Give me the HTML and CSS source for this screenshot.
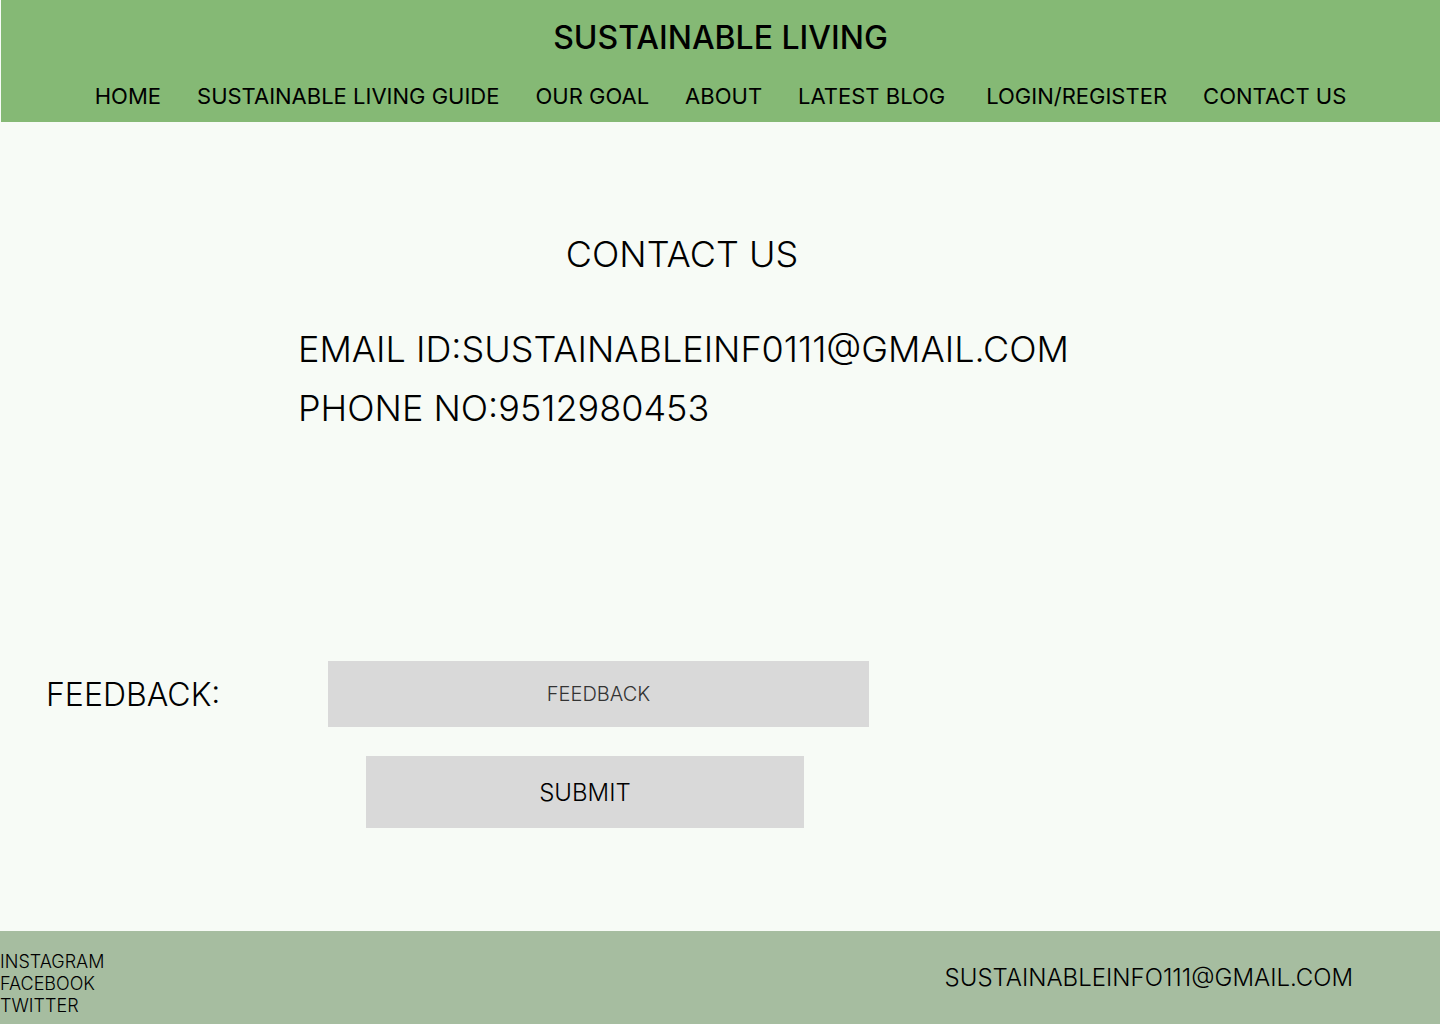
FILE: index.html
```html
<!DOCTYPE html>
<html lang="en">
<head>
<meta charset="utf-8">
<title>Contact Us - Sustainable Living</title>
<link rel="stylesheet" href="styles.css">
</head>
<body>
<header class="site-header">
  <h1 class="site-title">SUSTAINABLE LIVING</h1>
  <nav class="nav">
    <a href="#" class="nav-link">HOME</a>
    <a href="#" class="nav-link">SUSTAINABLE LIVING GUIDE</a>
    <a href="#" class="nav-link">OUR GOAL</a>
    <a href="#" class="nav-link">ABOUT</a>
    <a href="#" class="nav-link">LATEST BLOG</a>
    <a href="#" class="nav-link nav-link-wide">LOGIN/REGISTER</a>
    <a href="#" class="nav-link">CONTACT US</a>
  </nav>
</header>
<main class="main">
  <section class="contact">
    <h2 class="contact-title">CONTACT US</h2>
    <p class="contact-line">EMAIL ID:SUSTAINABLEINF0111@GMAIL.COM</p>
    <p class="contact-line">PHONE NO:9512980453</p>
  </section>
  <form class="feedback" onsubmit="return false;">
    <div class="feedback-row">
      <label class="feedback-label" for="fb">FEEDBACK:</label>
      <input class="feedback-input" id="fb" type="text" placeholder="FEEDBACK">
    </div>
    <button class="submit" type="submit">SUBMIT</button>
  </form>
</main>
<footer class="footer">
  <div class="social">
    <a href="#" class="social-link">INSTAGRAM</a>
    <a href="#" class="social-link">FACEBOOK</a>
    <a href="#" class="social-link">TWITTER</a>
  </div>
  <div class="footer-email">SUSTAINABLEINFO111@GMAIL.COM</div>
</footer>
</body>
</html>
```
FILE: styles.css
```css
* { box-sizing: border-box; }
html, body { margin: 0; padding: 0; }
body {
  background: #f7fbf6;
  font-family: Inter, "Noto Sans", sans-serif;
  color: #000;
  width: 1440px;
}
.site-header {
  background: #85b975;
  margin-left: 1px;
  height: 122px;
  padding-top: 20px;
  display: flex;
  flex-direction: column;
  align-items: center;
}
.site-title {
  margin: 0;
  font-size: 32px;
  line-height: 36px;
  font-weight: 500;
}
.nav {
  margin-top: 27px;
  display: flex;
  gap: 36px;
}
.nav-link {
  color: #000;
  text-decoration: none;
  font-size: 22px;
  line-height: 26px;
  font-weight: 400;
}
.nav-link-wide { margin-left: 5px; }
.main {
  height: 809px;
  padding-top: 110px;
}
.contact {
  margin-left: 298px;
  width: 768px;
}
.contact-title {
  margin: 0 0 44px;
  text-align: center;
  font-size: 36px;
  line-height: 44px;
  font-weight: 300;
}
.contact-line {
  margin: 0;
  font-size: 36px;
  line-height: 59px;
  font-weight: 300;
  white-space: nowrap;
}
.feedback {
  margin-top: 223px;
}
.feedback-row {
  display: flex;
  align-items: center;
}
.feedback-label {
  width: 328px;
  padding-left: 46px;
  font-size: 32px;
  font-weight: 300;
}
.feedback-input {
  width: 541px;
  height: 66px;
  border: none;
  background: #d9d9d9;
  text-align: center;
  font-family: inherit;
  font-size: 20px;
  font-weight: 300;
}
.feedback-input::placeholder { color: #333; }
.submit {
  display: block;
  margin: 29px 0 0 366px;
  width: 438px;
  height: 72px;
  border: none;
  background: #d9d9d9;
  font-family: inherit;
  font-size: 24px;
  font-weight: 300;
  color: #000;
}
.footer {
  background: #a6bda0;
  height: 93px;
  display: flex;
  justify-content: space-between;
  align-items: center;
  padding-right: 87px;
}
.social {
  display: flex;
  flex-direction: column;
  align-self: flex-start;
  padding-top: 20px;
}
.social-link {
  color: #000;
  text-decoration: none;
  font-size: 18px;
  line-height: 22px;
  font-weight: 300;
}
.footer-email {
  font-size: 24px;
  font-weight: 300;
}
```
